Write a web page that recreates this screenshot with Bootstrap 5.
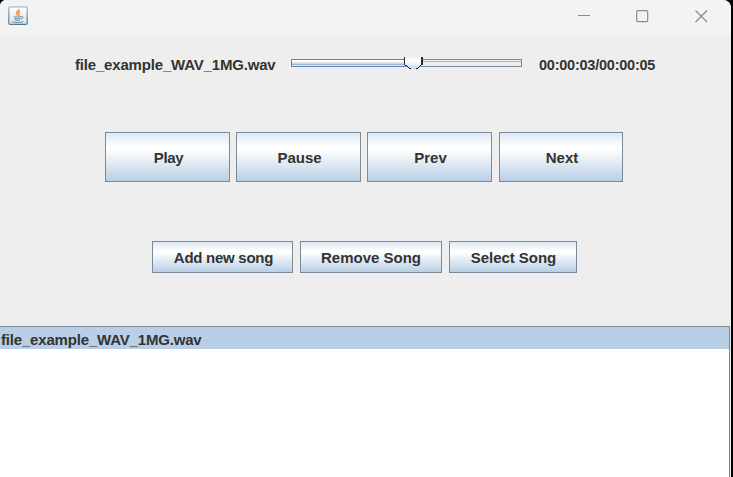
<!DOCTYPE html>
<html lang="en">
<head>
<meta charset="utf-8">
<title>Music player</title>
<link href="https://cdn.jsdelivr.net/npm/bootstrap@5.3.0/dist/css/bootstrap.min.css" rel="stylesheet">
<style>
html, body { height: 477px; overflow: hidden; background: #000; }
body { font: bold 15px/20px "Liberation Sans", Arial, sans-serif; color: #333; }
.window { width: 731px; height: 477px; background: #eee; border-radius: 6px 8px 0 0; }
.titlebar { height: 35px; background: #f3f3f3; padding: 0 23px 3px 8px; }
.captions { gap: 46px; }
.track-row { height: 97px; padding: 9px 0 0 75px; }
.song { width: 216px; margin-top: 11px; }
.slider { width: 231px; height: 13px; margin-top: 13px; }
.time { margin: 11px 0 0 17px; }
.controls { height: 109px; padding-left: 105px; gap: 6px; }
.manage { height: 85px; padding-left: 152px; gap: 7px; }
.metal { --bs-btn-padding-x: 0; --bs-btn-padding-y: 0; --bs-btn-border-radius: 0; font: inherit; color: #333; border: 1px solid #7a8a99;
  background: linear-gradient(#dde8f3 0, #fff 30%, #fff 34%, #b8cfe5 100%); width: 125px; height: 50px; padding: 1px 0 0 2px; }
.metal.slim { height: 32px; padding-left: 1px; }
.w-next { width: 124px; margin-left: 1px; }
.metal.w-add { width: 141px; letter-spacing: -.27px; padding-left: 2px; }
.metal.w-remove { width: 142px; padding-left: 0; }
.w-select { width: 128px; letter-spacing: -.05px; }
.w-play { letter-spacing: -.35px; }
.playlist { border: solid #7a8a99; border-width: 1px 1px 0 0; background: #fff; margin-right: 1px; border-radius: 0; }
.playlist .chosen { height: 22px; padding: 3px 0 0 1px; background: #b8cfe5; color: #333; border: 0; border-radius: 0; }
.t-song { letter-spacing: -.18px; }
.t-time { font-size: 14.5px; letter-spacing: -.23px; }
</style>
<script src="https://cdn.jsdelivr.net/npm/bootstrap@5.3.0/dist/js/bootstrap.bundle.min.js"></script>
</head>
<body>
<main class="window d-flex flex-column overflow-hidden">
  <header class="titlebar d-flex align-items-center justify-content-between">
    <svg width="20" height="20" viewBox="0 0 20 20" fill="none">
      <defs><linearGradient id="tile" x2="0" y2="1"><stop stop-color="#fff"/><stop offset="1" stop-color="#d9e2ea"/></linearGradient>
      <linearGradient id="edge" x2="0" y2="1"><stop stop-color="#a9bccb"/><stop offset="1" stop-color="#517892"/></linearGradient></defs>
      <rect x=".8" y=".8" width="18.4" height="17.6" rx="1.5" fill="url(#tile)" stroke="url(#edge)" stroke-width="1.3"/>
      <path d="M10.8 3c.7 2.2-3.3 2.6-2.3 4.7.3.8 1 1.3 1.1 2M12.4 5.4c-2.3 1.2-2.5 1.8-1.5 2.8.5.6.1 1.2-.3 1.6" stroke="#ef8f4c" stroke-width="1.5"/>
      <path d="M5.8 10.6c2 .7 5.5.5 7.5-.2M6.4 12.4c2 .6 4.5.5 6.2 0M7 14c1.5.5 3.5.5 5 0M13.3 10.6c2.2-.5 2.2 1.7-.3 2.5M4.2 15.2c-.5 1.6 9.2 1.7 11 .3" stroke="#6688a2"/>
    </svg>
    <div class="captions d-flex align-items-center">
      <svg width="13" height="13" fill="none" stroke="#8b8b8b"><path d="M1 5.5h12"/></svg>
      <svg width="13" height="13" fill="none" stroke="#8b8b8b" stroke-width="1.2"><rect x=".7" y=".7" width="11" height="11" rx="1.2"/></svg>
      <svg width="13" height="13" fill="none" stroke="#8b8b8b" stroke-width="1.2"><path d="M.5.5l11.5 11.5M12 .5L.5 12"/></svg>
    </div>
  </header>
  <section class="track-row d-flex align-items-start">
    <div class="song text-nowrap"><span class="t-song">file_example_WAV_1MG.wav</span></div>
    <svg class="slider flex-shrink-0" viewBox="0 0 231 13" shape-rendering="crispEdges">
      <defs><linearGradient id="knob" x2="0" y2="1"><stop stop-color="#edf5fc"/><stop offset=".3" stop-color="#fff"/><stop offset=".5" stop-color="#f4f9fd"/><stop offset="1" stop-color="#bcd3e8"/></linearGradient></defs>
      <rect x=".5" y="2.5" width="230" height="7" fill="#eee" stroke="#7a8a99"/>
      <path d="M120 4.5h110" stroke="#a3b8cc"/>
      <path d="M.5 2.5H120v7H.5z" fill="#fff" stroke="#6382bf"/>
      <path d="M1 5.5h118" stroke="#dbe6f1"/><path d="M1 6.5h118" stroke="#c8d9e9"/><path d="M1 7.5h118" stroke="#a3b8cc"/><path d="M1 8.5h118" stroke="#dde6ef"/>
      <path d="M114 0h17v8l-5 4h-7l-5-4z" fill="url(#knob)"/>
      <path d="M113 0h1v8h-1zM130 0h2v8h-2zM114 8h2v1h-2zM116 9h1v1h-1zM117 10h1v1h-1zM118 11h2v1h-2zM129 8h1v1h-1zM128 9h1v1h-1zM127 10h1v1h-1zM125 11h2v1h-2z" fill="#292929"/>
    </svg>
    <div class="time text-nowrap"><span class="t-time">00:00:03/00:00:05</span></div>
  </section>
  <section class="controls d-flex">
    <button class="btn metal w-play">Play</button>
    <button class="btn metal">Pause</button>
    <button class="btn metal">Prev</button>
    <button class="btn metal w-next">Next</button>
  </section>
  <section class="manage d-flex">
    <button class="btn metal slim w-add">Add new song</button>
    <button class="btn metal slim w-remove">Remove Song</button>
    <button class="btn metal slim w-select">Select Song</button>
  </section>
  <section class="playlist list-group flex-grow-1">
    <div class="list-group-item chosen text-nowrap"><span class="t-song">file_example_WAV_1MG.wav</span></div>
  </section>
</main>
</body>
</html>
